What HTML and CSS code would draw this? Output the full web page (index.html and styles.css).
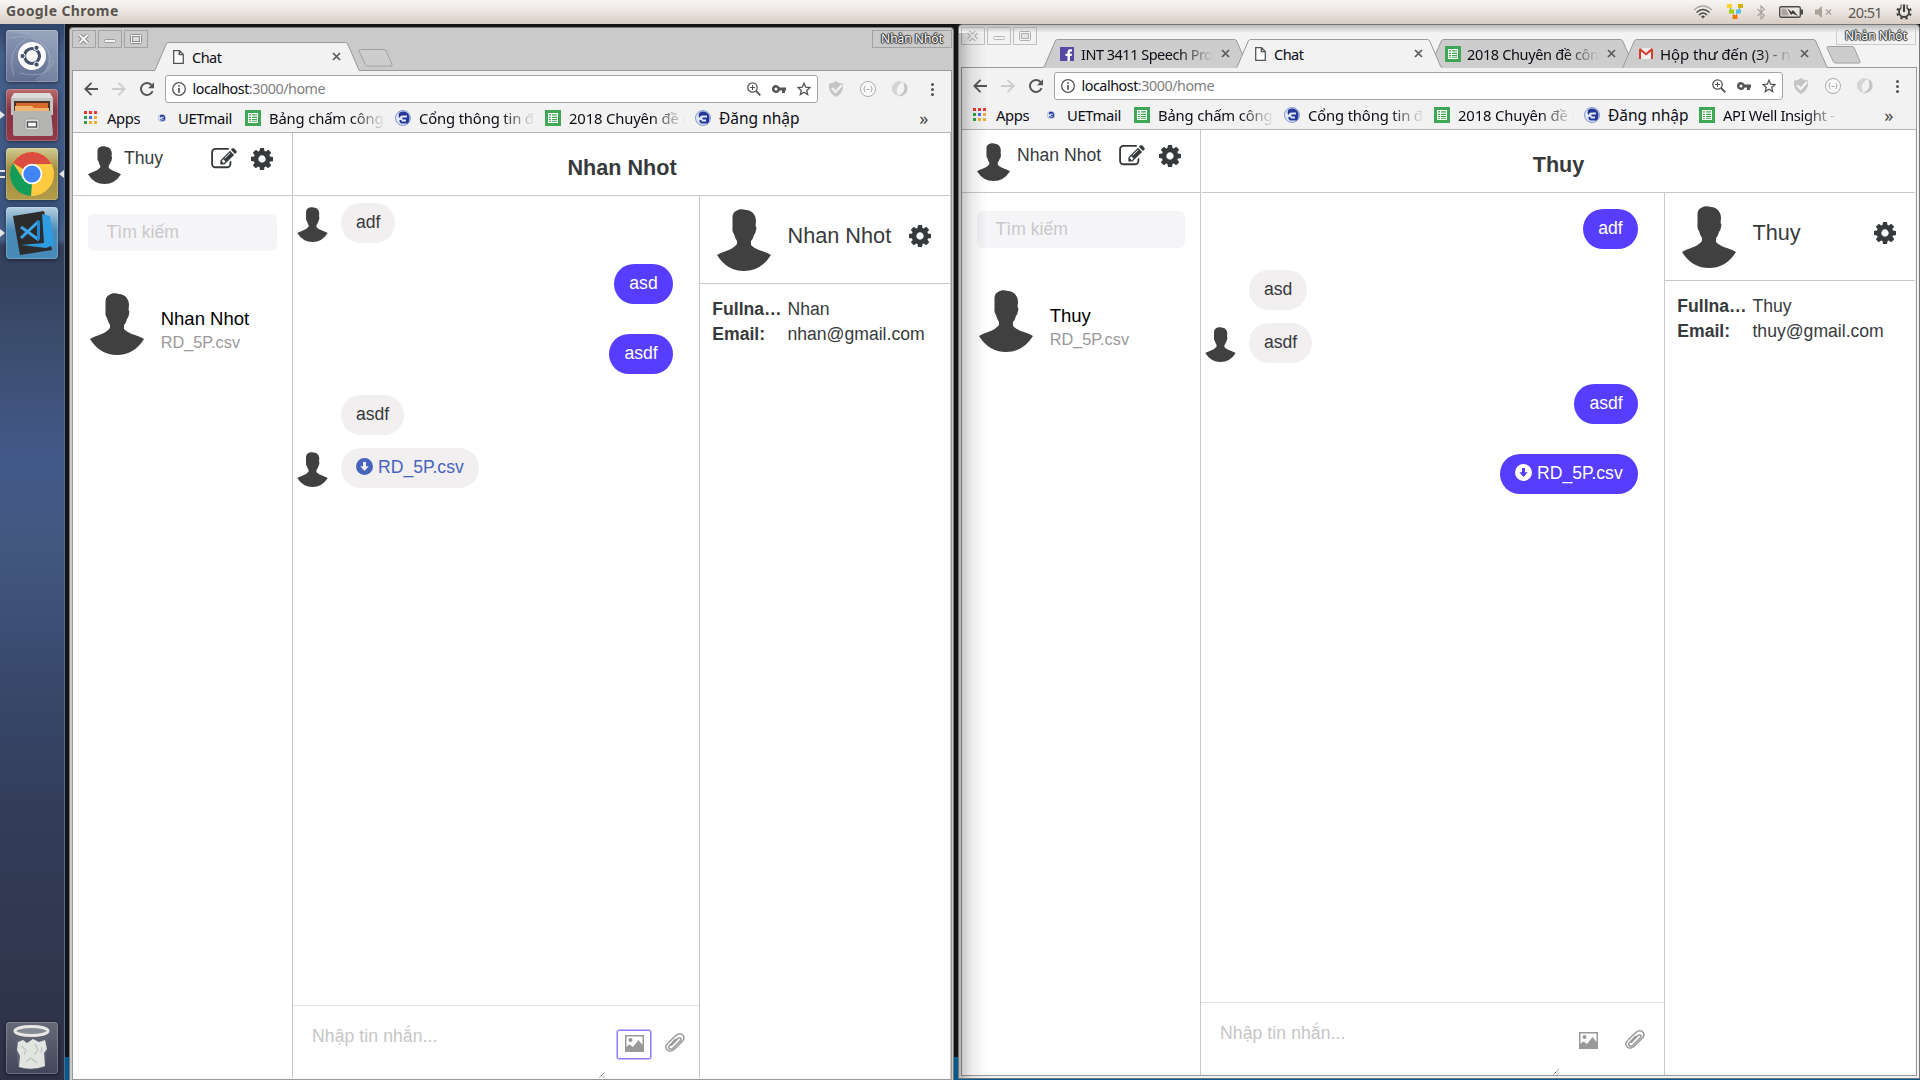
FILE: index.html
```html
<!DOCTYPE html>
<html lang="vi">
<head>
<meta charset="utf-8">
<title>Chat</title>
<link rel="stylesheet" href="styles.css">
</head>
<body>
<svg class="defs" aria-hidden="true">
  <symbol id="person" viewBox="0 0 54 62"><path d="M19 2C22 0 25 0 29 1C35 1 39 6 39 12L38.500 17Q40 18 39 21Q38.500 25 37 26Q36 30 34 32V36Q38 40 45 42Q51 44 54 46Q44 62 27 62Q10 62 0 46Q3 44 9 42Q16 40 20 35V32Q18 29 17 25Q15 23 15.500 18V10Q15 4 19 2Z" fill="#404040"/></symbol>
  <symbol id="cog" viewBox="128 128 1536 1536"><path d="M1152 896q0-106-75-181t-181-75-181 75-75 181 75 181 181 75 181-75 75-181zm512-109v222q0 12-8 23t-20 13l-185 28q-19 54-39 91 35 50 107 138 10 12 10 25t-9 23q-27 37-99 108t-94 71q-12 0-26-9l-138-108q-44 23-91 38-16 136-29 186-7 28-36 28h-222q-14 0-24.500-8.500t-11.500-21.500l-28-184q-49-16-90-37l-141 107q-10 9-25 9-14 0-25-11-126-114-165-168-7-10-7-23 0-12 8-23 15-21 51-66.500t54-70.500q-27-50-41-99l-183-27q-13-2-21-12.500t-8-23.500v-222q0-12 8-23t19-13l186-28q14-46 39-92-40-57-107-138-10-12-10-24 0-10 9-23 26-36 98.500-107.500t94.500-71.500q13 0 26 10l138 107q44-23 91-38 16-136 29-186 7-28 36-28h222q14 0 24.500 8.500t11.500 21.500l28 184q49 16 90 37l142-107q9-9 24-9 13 0 25 10 129 119 165 170 7 8 7 22 0 12-8 23-15 21-51 66.500t-54 70.500q26 50 41 98l183 28q13 2 21 12.500t8 23.500z" fill="#373a3c"/></symbol>
  <symbol id="edit" viewBox="0 128 1792 1536"><path d="M888 1184l116-116-152-152-116 116v56h96v96h56zm440-720q-16-16-33 1l-350 350q-17 17-1 33t33-1l350-350q17-17 1-33zm80 594v190q0 119-84.500 203.500t-203.500 84.500h-832q-119 0-203.500-84.500t-84.500-203.500v-832q0-119 84.500-203.500t203.500-84.500h832q63 0 117 25 15 7 18 23 3 17-9 29l-49 49q-14 14-32 8-23-6-45-6h-832q-66 0-113 47t-47 113v832q0 66 47 113t113 47h832q66 0 113-47t47-113v-126q0-13 9-22l64-64q15-15 35-7t20 29zm-96-738l288 288-672 672h-288v-288zm444 132l-92 92-288-288 92-92q28-28 68-28t68 28l152 152q28 28 28 68t-28 68z" fill="#373a3c"/></symbol>
  <symbol id="download" viewBox="0 0 17 17"><path fill-rule="evenodd" fill="currentColor" d="M8.500 0a8.500 8.500 0 1 1 0 17a8.500 8.500 0 1 1 0-17ZM7 4V8.200H4.300L8.500 13L12.700 8.200H10V4Z"/></symbol>
  <symbol id="image" viewBox="0 0 19 17"><path fill="#999" fill-rule="evenodd" d="M0 0H19V17H0ZM1.500 1.500V12L4 9.500L6 10.500L8 12L13.500 5L17.500 10V1.500ZM5.500 3a2 2 0 1 1 0 4a2 2 0 1 1 0-4Z"/></symbol>
  <symbol id="clip" viewBox="0 0 20 19"><path d="M3.500 9.500L10.500 2.800C13 .3 16.500.2 18 2.200C19.600 4.200 19 6.400 17.300 8.200L9.500 16C7.200 18.300 4 18.700 2.200 17C.5 15.300.6 12.700 2.500 10.700M6.500 12.300L13 5.600C14 4.600 15.300 4.700 15.800 5.500C16.300 6.300 16 7 15 8L7.800 15.300C6.600 16.400 5 16.500 4.200 15.600C3.400 14.700 3.600 13.600 4.700 12.400L10.500 6.300" fill="none" stroke="#999" stroke-width="1.500" stroke-linecap="round"/></symbol>
  <symbol id="grip" viewBox="0 0 6 6"><path d="M.5 5.500L5.500 .5M4 5.500L5.500 4" stroke="#555" stroke-dasharray="1.500 .6" fill="none"/></symbol>
  <symbol id="page" viewBox="0 0 11 14"><path d="M.7.700H6.500L10.300 4.500V13.300H.7ZM6.300.700V4.700H10.300" fill="#fff" stroke="#555" stroke-width="1.300"/></symbol>
  <symbol id="x" viewBox="0 0 9 9"><path d="M1 1L8 8M8 1L1 8" stroke="#5a5a5a" stroke-width="1.700"/></symbol>
  <symbol id="tabshape" viewBox="0 0 206 29"><path d="M0 28.500H.5Q1 28.500 1.500 27L12.300 2Q13 .5 14.500 .5H191.500Q193 .5 193.700 2L204.500 27Q205 28.500 206 28.500V29H0Z" fill="currentColor"/><path d="M0 28.500Q1 28.500 1.500 27L12.300 2Q13 .5 14.500 .5H191.500Q193 .5 193.700 2L204.500 27Q205 28.500 206 28.500" fill="none" stroke="#999"/></symbol>
  <symbol id="newtab" viewBox="0 0 35 18"><path d="M2.500.500H26Q27.500.500 28.200 2L34 15.500Q34.500 17 33 17H9.500Q8 17 7.300 15.500L1 2Q.5.500 2.500.500Z" fill="currentColor" stroke="#a0a0a0"/></symbol>
  <symbol id="back" viewBox="0 0 14 14"><path d="M14 7H1.500M7.500 .8L1.300 7L7.500 13.200" fill="none" stroke="currentColor" stroke-width="1.900"/></symbol>
  <symbol id="reload" viewBox="0 0 14 14"><path d="M12.600 9.200A6 6 0 1 1 11.500 3" fill="none" stroke="#555" stroke-width="1.900"/><path d="M14 .3V6.200H8Z" fill="#555"/></symbol>
  <symbol id="info" viewBox="0 0 14 14"><circle cx="7" cy="7" r="6.300" fill="none" stroke="#555" stroke-width="1.300"/><path d="M6.200 3.200H7.800V4.800H6.200ZM6.200 6H7.800V10.800H6.200Z" fill="#444"/></symbol>
  <symbol id="zoomin" viewBox="0 0 14 14"><circle cx="5.500" cy="5.500" r="4.700" fill="none" stroke="#555" stroke-width="1.300"/><path d="M9 9L13.300 13.300" stroke="#555" stroke-width="1.800"/><path d="M3 5.500H8M5.500 3V8" stroke="#555"/></symbol>
  <symbol id="key" viewBox="0 0 14 14"><path fill-rule="evenodd" fill="#555" d="M4 3A4 4 0 0 1 7.700 5.500H14V8.500H13V11H10V8.500H7.700A4 4 0 1 1 4 3ZM4 5.500A1.500 1.500 0 1 0 4 8.500A1.500 1.500 0 1 0 4 5.500Z"/></symbol>
  <symbol id="star" viewBox="0 0 14 14"><path d="M7 1.300L8.700 5.200L12.900 5.600L9.700 8.400L10.700 12.600L7 10.300L3.300 12.600L4.300 8.400L1.100 5.600L5.300 5.200Z" fill="none" stroke="#555" stroke-width="1.300"/></symbol>
  <symbol id="shield" viewBox="0 0 16 16"><path d="M1 2.500Q5 2.500 8 0Q11 2.500 15 2.500V7Q14 13 8 16Q2 13 1 7Z" fill="#c4c4c4"/><path d="M4 7L7.500 11L14 4" fill="none" stroke="#f2f2f2" stroke-width="2.300"/></symbol>
  <symbol id="json" viewBox="0 0 16 16"><circle cx="8" cy="8" r="7.500" fill="#fafafa" stroke="#aaa"/><path d="M5.500 5Q4.200 5 4.500 6.500Q4.700 8 3.500 8Q4.700 8 4.500 9.500Q4.200 11 5.500 11M10.500 5Q11.800 5 11.500 6.500Q11.300 8 12.500 8Q11.300 8 11.500 9.500Q11.800 11 10.500 11M6.500 8.500H9.500" fill="none" stroke="#aaa"/></symbol>
  <symbol id="swirl" viewBox="0 0 16 16"><path d="M10.500 1A7.300 7.300 0 0 0 1.500 12Q3 14.500 6.500 14.500Q1.500 7 10.500 1Z" fill="#d4d4d4"/><path d="M11 .8Q17.500 4 14.800 11Q11.500 16 5.500 15.200Q12 12.500 12.300 8Q12.500 4 11 .8Z" fill="#c4c4c4"/></symbol>
  <symbol id="apps" viewBox="0 0 13 13"><path d="M0 0h3v3H0zM5 0h3v3H5zM10 0h3v3h-3z" fill="#e33"/><path d="M0 5h3v3H0zM0 10h3v3H0z" fill="#2ba24c"/><path d="M5 5h3v3H5z" fill="#4a6cf0"/><path d="M10 5h3v3h-3zM5 10h3v3H5zM10 10h3v3h-3z" fill="#eeb035"/></symbol>
  <symbol id="sheet" viewBox="0 0 16 16"><path d="M0 0H16V16H0Z" fill="#3fa856"/><path d="M3 3H13V13H3Z" fill="#fff"/><path d="M4 4.200h2v1.400H4zM7 4.200h5v1.400H7zM4 6.700h2v1.200H4zM7 6.700h5v1.200H7zM4 9h2v1.200H4zM7 9h5v1.200H7zM4 11.200h2v.9H4zM7 11.200h5v.9H7z" fill="#3fa856"/></symbol>
  <symbol id="seal" viewBox="0 0 16 16"><circle cx="8" cy="8" r="7.500" fill="#dfe6f5" stroke="#8299cb"/><path d="M4 3Q9 0 13 3.500Q16 8 13 13.500H6Q4 12.500 4.500 10H6.500V11.500H11V9.500H7.500V7.500H12V5.500H7Q5 5.500 4.500 8Q3 5.500 4 3Z" fill="#25389a"/></symbol>
  <symbol id="fb" viewBox="0 0 14 14"><path d="M0 0H14V14H0Z" fill="#5848a5"/><path d="M7.500 14V9H5.500V6.800H7.500V5Q7.500 2.300 10.200 2.300H12V4.500H10.700Q9.900 4.500 9.900 5.300V6.800H12L11.700 9H9.900V14Z" fill="#fff"/></symbol>
  <symbol id="gmail" viewBox="0 0 14 11"><path d="M0 0H14V11H0Z" fill="#f0eeee"/><path d="M0 11V1Q1 0 2 .5L7 5L12 .5Q13 0 14 1V11H12V3.500L7 7.500L2 3.500V11Z" fill="#d93b30"/></symbol>
  <symbol id="wx" viewBox="0 0 24 18"><path d="M.5.500H23.500V17.500H.5Z" fill="none" stroke="#a2a2a2"/><path d="M7.500 5L15.500 13M15.500 5L7.500 13" stroke="#8c8c8c" stroke-width="4"/><path d="M7.500 5L15.500 13M15.500 5L7.500 13" stroke="#f4f4f4" stroke-width="2"/></symbol>
  <symbol id="wmin" viewBox="0 0 24 18"><path d="M.5.500H23.500V17.500H.5Z" fill="none" stroke="#a2a2a2"/><rect x="6.500" y="9.500" width="11" height="3" rx="1" fill="#f4f4f4" stroke="#9a9a9a"/></symbol>
  <symbol id="wmax" viewBox="0 0 24 18"><path d="M.5.500H23.500V17.500H.5Z" fill="none" stroke="#a2a2a2"/><rect x="6.500" y="4.500" width="11" height="9" rx="1" fill="#f4f4f4" stroke="#8c8c8c"/><rect x="8.500" y="6.500" width="7" height="5" fill="#ddd" stroke="#8c8c8c"/></symbol>
</svg>

<header class="panel">
  <span class="panel-title">Google Chrome</span>
  <div class="tray">
    <svg class="wifi" width="20" height="14" viewBox="0 0 20 14"><g fill="none" stroke-width="1.500"><path d="M1 5Q10-3 19 5" stroke="#aaa49d"/><path d="M3.500 7.500Q10 1.500 16.500 7.500M6 10Q10 6 14 10" stroke="#4c4a47"/></g><path d="M8 11.500Q10 9.500 12 11.500L10 13.500Z" fill="#4c4a47"/></svg>
    <svg class="net" width="16" height="16" viewBox="0 0 16 16"><path d="M3 3L5 8L8 13L11 8L13 3" stroke="#999" fill="none"/><path d="M0 0h5v4H0z" fill="#fcd32c"/><path d="M11 0h5v4h-5z" fill="#d8b000"/><path d="M2 5.500h5v4H2z" fill="#a5d400"/><path d="M9 5.500h5v4H9z" fill="#5bc0e8"/><path d="M5.500 11h5v4h-5z" fill="#f57900"/></svg>
    <svg class="bt" width="8" height="15" viewBox="0 0 8 15"><path d="M.5 4L7.300 10.500L4 14V1L7.300 4.300L.5 11" fill="none" stroke="#aaa49d" stroke-width="1.200"/></svg>
    <svg class="bat" width="24" height="12" viewBox="0 0 24 12"><rect x=".7" y=".7" width="20.600" height="10.600" rx="1.500" fill="none" stroke="#4c4a47" stroke-width="1.400"/><path d="M22 3.500h2v5h-2z" fill="#4c4a47"/><path d="M2.500 2.500H7L10 9.500H2.500Z" fill="#aaa49d"/><path d="M8 2L12.500 6L14 4L19 10L13.500 7.500L12 9Z" fill="#3b3936"/></svg>
    <svg class="mute" width="17" height="12" viewBox="0 0 17 12"><path d="M0 3.500H3L7 0V12L3 8.500H0Z" fill="#aaa49d"/><path d="M11 3.500L16 8.500M16 3.500L11 8.500" stroke="#aaa49d" stroke-width="1.500"/></svg>
    <span class="clock">20:51</span>
    <svg class="power" width="16" height="16" viewBox="0 0 16 16"><circle cx="8" cy="8" r="5" fill="none" stroke="#3f3d3a" stroke-width="1.800"/><circle cx="8" cy="8" r="6.700" fill="none" stroke="#3f3d3a" stroke-width="2.200" stroke-dasharray="2.200 3.060" stroke-dashoffset="-1.500"/><path d="M5.500 0H10.500V7H5.500Z" fill="#e5dfd9"/><path d="M8 .5V8" stroke="#3f3d3a" stroke-width="2"/></svg>
  </div>
</header>

<nav class="launcher">
  <div class="tile tile-dash"><svg viewBox="0 0 52 52"><g fill="none" stroke="#aab7cf" opacity=".55"><path d="M3 8Q28 2 42 20Q50 36 30 50"/><path d="M8 46Q0 20 20 9M48 30Q42 50 14 43"/></g><path d="M0 2Q35 4 42 24Q44 40 30 52H52V0H0Z" fill="#fff" opacity=".12"/><circle cx="26" cy="26" r="14" fill="#fff"/><circle cx="26" cy="26" r="7.500" fill="none" stroke="#44516f" stroke-width="3.200"/><g fill="#44516f" stroke="#fff"><circle cx="16.500" cy="26" r="2.600"/><circle cx="30.500" cy="17.800" r="2.600"/><circle cx="30.500" cy="34.500" r="2.600"/></g></svg></div>
  <div class="tile tile-files"><svg viewBox="0 0 52 52"><path d="M8 4H44L47 9V26H5V9Z" fill="#dcdcda"/><path d="M5 9H47V26H5Z" fill="#c4c4c2"/><path d="M8 12H44V24H8Z" fill="#4b332b"/><path d="M10 14H42V24H10Z" fill="#d96a2c"/><path d="M9 17H26L28 19H43V25H9Z" fill="#f2b673"/><path d="M7 22H45L47 45Q47 47 45 47H9Q7 47 7 45Z" fill="#b4b4b2"/><rect x="19" y="30" width="14" height="11" rx="2" fill="#d9d9d7" stroke="#a0a09e"/><rect x="21.500" y="33" width="9" height="5" fill="#fff" stroke="#444" stroke-width="1.300"/></svg></div>
  <div class="tile tile-chrome"><svg viewBox="0 0 52 52"><circle cx="26" cy="26" r="22" fill="#fdca40"/><path d="M26 26L6.900 15A22 22 0 0 1 45.500 16H26Z" fill="#dc4c40"/><path d="M6.900 15L17.300 31L26 36L25 48A22 22 0 0 1 6.900 15Z" fill="#149c58"/><circle cx="26" cy="26" r="10.300" fill="#fff"/><circle cx="26" cy="26" r="8.600" fill="#4285f4"/></svg></div>
  <div class="tile tile-code"><svg viewBox="0 0 52 52"><path d="M7 9L38 4L46 43L14 48Z" fill="#2c2c2c"/><path d="M36 7L44 9L48 38L40 41L15 38L38 36Z" fill="#2f9be0"/><path d="M15 31L33 14M15 20L33 33" stroke="#3aa5ea" stroke-width="3"/><path d="M31 13L34 14V32L31 34Z" fill="#1f86d0"/></svg></div>
  <div class="tile tile-trash"><svg viewBox="0 0 52 52"><path d="M9 10H42L39 45Q26 50 12 45Z" fill="#5d6372"/><path d="M12 20L17 18L21 21L27 17L33 20L39 18L41 27L38 31L39 44Q26 49 13 45L14 34L11 28Z" fill="#e2e4e1"/><path d="M15 24L20 28L18 33M29 22L32 28L28 33M36 25L35 31M20 40L25 36L31 41" stroke="#bfc2c0" stroke-width="1.200" fill="none"/><ellipse cx="25.500" cy="9" rx="16.500" ry="4.500" fill="#858b92" stroke="#e8e9e4" stroke-width="3"/></svg></div>
  <i class="pip pip-files"></i><i class="pip pip-chrome"></i><i class="pip pip-active"></i><i class="pip pip-code"></i>
</nav>

<section class="window window-left">
  <div class="titlebar">
    <div class="controls"><svg><use href="#wx"/></svg><svg><use href="#wmin"/></svg><svg><use href="#wmax"/></svg></div>
    <div class="tabs">
      <div class="tab active"><svg class="shape"><use href="#tabshape"/></svg><svg class="fav fav-page"><use href="#page"/></svg><span class="label">Chat</span><svg class="close"><use href="#x"/></svg></div>
      <svg class="newtab"><use href="#newtab"/></svg>
    </div>
    <div class="profile">Nhàn Nhót</div>
  </div>
  <div class="frame">
    <div class="toolbar">
      <svg class="nav-icon"><use href="#back"/></svg><svg class="nav-icon forward"><use href="#back"/></svg><svg class="nav-icon"><use href="#reload"/></svg>
      <div class="omnibox"><svg><use href="#info"/></svg><span class="url"><b>localhost</b>:3000/home</span><svg><use href="#zoomin"/></svg><svg><use href="#key"/></svg><svg><use href="#star"/></svg></div>
      <div class="extensions"><svg><use href="#shield"/></svg><svg><use href="#json"/></svg><svg><use href="#swirl"/></svg><i class="kebab"></i></div>
    </div>
    <div class="bookmarks">
      <div class="bm bm-apps"><svg class="apps"><use href="#apps"/></svg><span>Apps</span></div>
      <div class="bm bm-uet"><svg class="dot"><use href="#seal"/></svg><span>UETmail</span></div>
      <div class="bm vi"><svg><use href="#sheet"/></svg><span class="cut">Bảng chấm công</span></div>
      <div class="bm vi"><svg><use href="#seal"/></svg><span class="cut">Cổng thông tin đ</span></div>
      <div class="bm vi"><svg><use href="#sheet"/></svg><span class="cut">2018 Chuyên đề c</span></div>
      <div class="bm bm-login"><svg><use href="#seal"/></svg><span>Đăng nhập</span></div>
      <div class="more">»</div>
    </div>
    <main class="app">
      <aside class="sidebar">
        <div class="me"><svg class="av-me"><use href="#person"/></svg><span>Thuy</span><svg class="edit"><use href="#edit"/></svg><svg class="cog"><use href="#cog"/></svg></div>
        <div class="search">Tìm kiếm</div>
        <div class="contact"><svg class="av"><use href="#person"/></svg><div><p class="name">Nhan Nhot</p><p class="last">RD_5P.csv</p></div></div>
      </aside>
      <div class="main">
        <h1>Nhan Nhot</h1>
        <div class="columns">
          <div class="chat">
            <div class="messages">
              <div class="msg in first"><svg><use href="#person"/></svg><p>adf</p></div>
              <div class="msg out"><p>asd</p></div>
              <div class="msg out again"><p>asdf</p></div>
              <div class="msg in"><p>asdf</p></div>
              <div class="msg in follow"><svg><use href="#person"/></svg><p class="file"><svg><use href="#download"/></svg> RD_5P.csv</p></div>
            </div>
            <div class="composer"><div class="textarea">Nhập tin nhắn...<svg><use href="#grip"/></svg></div><div class="pick focused"><svg><use href="#image"/></svg></div><svg class="clip"><use href="#clip"/></svg></div>
          </div>
          <div class="info">
            <div class="who"><svg class="av"><use href="#person"/></svg><span>Nhan Nhot</span><svg class="cog"><use href="#cog"/></svg></div>
            <dl><dt>Fullna…</dt><dd>Nhan</dd><dt>Email:</dt><dd>nhan@gmail.com</dd></dl>
          </div>
        </div>
      </div>
    </main>
  </div>
</section>

<section class="window window-right">
  <div class="titlebar">
    <div class="controls"><svg><use href="#wx"/></svg><svg><use href="#wmin"/></svg><svg><use href="#wmax"/></svg></div>
    <div class="tabs">
      <div class="tab"><svg class="shape"><use href="#tabshape"/></svg><svg class="fav fav-fb"><use href="#fb"/></svg><span class="label cut">INT 3411 Speech Pro</span><svg class="close"><use href="#x"/></svg></div>
      <div class="tab active"><svg class="shape"><use href="#tabshape"/></svg><svg class="fav fav-page"><use href="#page"/></svg><span class="label">Chat</span><svg class="close"><use href="#x"/></svg></div>
      <div class="tab"><svg class="shape"><use href="#tabshape"/></svg><svg class="fav fav-sheet"><use href="#sheet"/></svg><span class="label cut vi">2018 Chuyên đề công</span><svg class="close"><use href="#x"/></svg></div>
      <div class="tab"><svg class="shape"><use href="#tabshape"/></svg><svg class="fav fav-gm"><use href="#gmail"/></svg><span class="label cut vi wide">Hộp thư đến (3) - nh</span><svg class="close"><use href="#x"/></svg></div>
      <svg class="newtab"><use href="#newtab"/></svg>
    </div>
    <div class="profile">Nhàn Nhót</div>
  </div>
  <div class="frame">
    <div class="toolbar">
      <svg class="nav-icon"><use href="#back"/></svg><svg class="nav-icon forward"><use href="#back"/></svg><svg class="nav-icon"><use href="#reload"/></svg>
      <div class="omnibox"><svg><use href="#info"/></svg><span class="url"><b>localhost</b>:3000/home</span><svg><use href="#zoomin"/></svg><svg><use href="#key"/></svg><svg><use href="#star"/></svg></div>
      <div class="extensions"><svg><use href="#shield"/></svg><svg><use href="#json"/></svg><svg><use href="#swirl"/></svg><i class="kebab"></i></div>
    </div>
    <div class="bookmarks">
      <div class="bm bm-apps"><svg class="apps"><use href="#apps"/></svg><span>Apps</span></div>
      <div class="bm bm-uet"><svg class="dot"><use href="#seal"/></svg><span>UETmail</span></div>
      <div class="bm vi"><svg><use href="#sheet"/></svg><span class="cut">Bảng chấm công</span></div>
      <div class="bm vi"><svg><use href="#seal"/></svg><span class="cut">Cổng thông tin đ</span></div>
      <div class="bm vi"><svg><use href="#sheet"/></svg><span class="cut">2018 Chuyên đề c</span></div>
      <div class="bm bm-login"><svg><use href="#seal"/></svg><span>Đăng nhập</span></div>
      <div class="bm"><svg><use href="#sheet"/></svg><span class="cut">API Well Insight - D</span></div>
      <div class="more">»</div>
    </div>
    <main class="app">
      <aside class="sidebar">
        <div class="me"><svg class="av-me"><use href="#person"/></svg><span>Nhan Nhot</span><svg class="edit"><use href="#edit"/></svg><svg class="cog"><use href="#cog"/></svg></div>
        <div class="search">Tìm kiếm</div>
        <div class="contact"><svg class="av"><use href="#person"/></svg><div><p class="name">Thuy</p><p class="last">RD_5P.csv</p></div></div>
      </aside>
      <div class="main">
        <h1>Thuy</h1>
        <div class="columns">
          <div class="chat">
            <div class="messages">
              <div class="msg out first"><p>adf</p></div>
              <div class="msg in"><p>asd</p></div>
              <div class="msg in follow"><svg><use href="#person"/></svg><p>asdf</p></div>
              <div class="msg out"><p>asdf</p></div>
              <div class="msg out again"><p class="file"><svg><use href="#download"/></svg> RD_5P.csv</p></div>
            </div>
            <div class="composer"><div class="textarea">Nhập tin nhắn...<svg><use href="#grip"/></svg></div><div class="pick"><svg><use href="#image"/></svg></div><svg class="clip"><use href="#clip"/></svg></div>
          </div>
          <div class="info">
            <div class="who"><svg class="av"><use href="#person"/></svg><span>Thuy</span><svg class="cog"><use href="#cog"/></svg></div>
            <dl><dt>Fullna…</dt><dd>Thuy</dd><dt>Email:</dt><dd>thuy@gmail.com</dd></dl>
          </div>
        </div>
      </div>
    </main>
  </div>
</section>
</body>
</html>
```
FILE: styles.css
```css
* { box-sizing: border-box; margin: 0; padding: 0; }
body { width: 1920px; height: 1080px; overflow: hidden; position: relative; background: linear-gradient(#141414 0 1057px, #045a8c 1057px); font-family: "Noto Sans", "Open Sans", sans-serif; color: #1a1a1a; }
svg { display: block; flex: none; }
.defs { position: absolute; width: 0; height: 0; }

/* top panel */
.panel { height: 24px; display: flex; align-items: center; justify-content: space-between; padding: 0 8px 0 6px; background: linear-gradient(#f7f5f3, #e9e4df 50%, #d7cdc4); color: #5a544e; }
.panel-title { font-weight: 700; font-size: 14px; line-height: 20px; letter-spacing: .4px; margin-top: -2px; }
.tray { display: flex; align-items: center; }
.net { margin-left: 14px; }
.bt { margin-left: 14px; }
.bat { margin-left: 14px; }
.mute { margin-left: 12px; }
.clock { margin-left: 16px; width: 34px; font-size: 14.500px; line-height: 20px; letter-spacing: -.6px; white-space: nowrap; }
.power { margin-left: 14px; }

/* launcher */
.launcher { position: relative; width: 65px; height: 1056px; padding: 6px 0 6px 6px; display: flex; flex-direction: column; gap: 7px; background: linear-gradient(#2f456b, #46608c 30px, #3d5580 190px, #4a628c 215px, #32405c 222px, #35435f 260px, #3b4d6e 320px, #43598a 440px, #43587f 520px, #38496d 650px, #333c58 800px, #2d3246 100%); border-right: 1px solid #4f6c98; }
.tile { width: 52px; height: 52px; flex: none; border-radius: 4px; box-shadow: inset 0 0 0 1px rgba(255,255,255,.2), 0 1px 4px rgba(0,0,0,.5); }
.tile svg { width: 52px; height: 52px; }
.tile-dash { background: linear-gradient(#8c9ab5, #626f93); }
.tile-files { background: linear-gradient(#bd6b6d, #833542 40%, #943849); }
.tile-chrome { background: linear-gradient(#d5cb91, #a18d40 40%, #b29c49); }
.tile-code { background: linear-gradient(#b5cfe0, #4a8bb8 45%, #468ab8); }
.tile-trash { margin-top: auto; background: linear-gradient(#666a78, #41465a); }
.pip { position: absolute; border: solid transparent; border-width: 4px 0 4px 5px; border-left-color: #e4e4e4; left: 0; }
.pip-files { top: 87px; }
.pip-code { top: 205px; }
.pip-chrome { top: 146px; width: 5px; height: 8px; border: solid #e4e4e4; border-width: 2px 0; }
.pip-active { top: 146px; left: 59px; border-width: 4px 5px 4px 0; border-color: transparent #e4e4e4; }

/* browser windows */
.window { position: absolute; padding: 0 3px 0 2px; display: flex; flex-direction: column; border: 1px solid #777; border-bottom: 0; border-radius: 4px 4px 0 0; }
.window-left { left: 69px; top: 27px; width: 885px; height: 1053px; background: #cacaca; padding-right: 1px; }
.window-right { left: 958px; top: 24px; width: 962px; height: 1055px; background: linear-gradient(#bbb, #f3f3f3 8px); border-bottom: 1px solid #777; padding-bottom: 2px; }
.window-right::after { content: ""; position: absolute; left: 0; top: 8px; bottom: 0; width: 28px; background: linear-gradient(90deg, rgba(0,0,0,.26), rgba(0,0,0,.08) 45%, transparent); }
.titlebar { height: 42px; flex: none; display: flex; align-items: flex-start; position: relative; }
.controls { display: flex; gap: 2px; margin-top: 2px; width: 82px; }
.controls svg { width: 24px; height: 18px; }
.window-right .controls { opacity: .65; }
.tabs { display: flex; margin-top: 14px; height: 29px; }
.tab { position: relative; width: 206px; height: 29px; margin-right: -13px; display: flex; align-items: center; color: #cdcdcd; padding: 0 19px 0 17px; }
.tab.active { color: #f2f2f2; z-index: 2; padding-left: 19px; }
.tab .shape { position: absolute; left: 0; top: 0; width: 206px; height: 29px; }
.fav { position: relative; width: 16px; height: 16px; }
.fav-page { width: 11px; height: 14px; margin-right: 2px; }
.fav-fb { width: 14px; height: 14px; margin-right: 1px; }
.fav-gm { width: 14px; height: 11px; margin-right: 1px; }
.fav-sheet { margin-left: -1px; }
.label { position: relative; flex: 1; margin: 0 8px 0 6px; min-width: 0; white-space: nowrap; overflow: hidden; font-size: 14.500px; line-height: 22px; letter-spacing: -.5px; color: #0c0c14; }
.label.vi { letter-spacing: -.35px; }
.label.wide { font-size: 15px; letter-spacing: -.1px; }
.cut { -webkit-mask-image: linear-gradient(90deg, #000 calc(100% - 34px), transparent); mask-image: linear-gradient(90deg, #000 calc(100% - 34px), transparent); }
.close { position: relative; width: 9px; height: 9px; }
.newtab { width: 35px; height: 18px; margin: 7px 0 0 11px; color: #cdcdcd; }
.profile { position: absolute; right: 0; top: 2px; width: 80px; height: 18px; border: 1px solid #a2a2a2; text-align: center; font-size: 12px; line-height: 15px; color: #fff; text-shadow: 0 0 1px #333, 1px 0 1px #333, -1px 0 1px #333, 0 1px 1px #333, 0 -1px 1px #333; white-space: nowrap; }
.window-right .profile { border-color: #ccc; }
.frame { flex: 1; min-height: 0; display: flex; flex-direction: column; border: 1px solid #999; }
.window-right .frame { margin-right: -1px; }
.toolbar { height: 36px; flex: none; background: #f2f2f2; display: flex; align-items: center; padding-left: 11px; }
.nav-icon { width: 14px; height: 14px; margin-right: 14px; color: #555; }
.nav-icon + .nav-icon + .nav-icon { margin-right: 11px; }
.forward { transform: scaleX(-1); color: #ccc; }
.omnibox { flex: 1; height: 28px; border: 1px solid #a5a5a5; border-radius: 3px; background: #fff; display: flex; align-items: center; padding: 0 6px; gap: 11px; }
.omnibox svg { width: 14px; height: 14px; }
.url { flex: 1; margin-left: -4.500px; font-size: 14.300px; line-height: 20px; letter-spacing: -.45px; color: #808080; }
.url b { font-weight: 400; color: #0c0c14; }
.extensions { width: 133px; padding-left: 10px; display: flex; gap: 16px; align-items: center; }
.extensions svg { width: 16px; height: 16px; }
.kebab { width: 3px; height: 3px; margin-left: 7px; border-radius: 50%; background: #555; box-shadow: 0 -5px #555, 0 5px #555; }
.bookmarks { height: 26px; flex: none; background: #f2f2f2; border-bottom: 1px solid #b5b5b5; display: flex; align-items: center; padding: 0 23px 4px 11px; font-size: 14.800px; letter-spacing: -.35px; color: #0c0c14; }
.bm { width: 150px; flex: none; display: flex; gap: 8px; align-items: center; white-space: nowrap; line-height: 22px; }
.bm svg { width: 16px; height: 16px; }
.bm .apps { width: 13px; height: 13px; }
.bm span { overflow: hidden; }
.bm .cut { width: 116px; }
.vi { letter-spacing: -.15px; }
.bm-apps { width: 74px; gap: 10px; }
.bm-uet { width: 87px; gap: 12px; }
.bm .dot { width: 8px; height: 8px; }
.bm-login { width: 115px; font-size: 15.500px; letter-spacing: 0; }
.more { margin-left: auto; font-size: 18px; line-height: 20px; color: #444; }

/* chat application */
.app { flex: 1; min-height: 0; display: flex; background: #fff; font-family: "Liberation Sans", Arial, sans-serif; font-size: 17.600px; color: #373a3c; margin-right: 1px; }
.window-left .app { border-bottom: 1px solid #fff; }
.sidebar { width: 220px; flex: none; border-right: 1px solid #c8c8c8; }
.window-right .sidebar { width: 239px; }
.me { height: 63px; border-bottom: 1px solid #c8c8c8; display: flex; align-items: flex-start; padding: 13px 19.500px 0 15px; }
.me span { flex: 1; margin-left: 3px; line-height: 24px; white-space: nowrap; }
.window-right .me span { margin-left: 7px; }
.av-me { width: 33px; height: 38px; }
.edit { width: 26px; height: 22px; margin: 2px 14px 0 0; }
.cog { width: 22px; height: 22px; margin-top: 2px; }
.search { margin: 18px 15px 0; height: 37px; border-radius: 6px; background: #f5f5f8; color: #c9c9c9; padding-left: 18.500px; line-height: 36px; }
.contact { margin-top: 42px; padding-left: 17px; display: flex; gap: 16.700px; }
.av { width: 54px; height: 62px; }
.name { margin-top: 14px; font-size: 18.500px; line-height: 24px; color: #000; }
.last { font-size: 16.300px; line-height: 23px; color: #999; }
.main { flex: 1; min-width: 0; display: flex; flex-direction: column; }
h1 { height: 63px; flex: none; border-bottom: 1px solid #c8c8c8; text-align: center; font-size: 21.600px; line-height: 70px; margin-left: 1px; }
.columns { flex: 1; min-height: 0; display: flex; }
.chat { flex: 1; display: flex; flex-direction: column; border-right: 1px solid #c8c8c8; }
.messages { flex: 1; padding: 7px 26px 0 4px; }
.window-right .messages { padding-top: 16px; }
.msg { display: flex; margin-top: 21.200px; padding-left: 44px; position: relative; }
.msg.first { margin-top: 0; }
.msg.follow { margin-top: 12.500px; }
.msg.again { margin-top: 30px; }
.msg.out { justify-content: flex-end; }
.msg.in > svg { width: 31px; height: 35px; margin: 4px 13px 0 -44px; }
.msg p { height: 40px; border-radius: 20px; padding: 0 15px; line-height: 39px; background: #f1eff0; white-space: nowrap; }
.msg.out p { background: #563dff; color: #fff; padding: 0 15.300px; }
.msg .file { display: flex; gap: 5px; color: #4764bd; }
.file svg { width: 17px; height: 17px; margin-top: 10px; }
.composer { height: 73px; flex: none; border-top: 1px solid #e2e2e2; display: flex; align-items: flex-start; padding-right: 14px; }
.textarea { flex: 1; align-self: stretch; position: relative; padding-left: 19px; line-height: 60px; letter-spacing: .08px; color: #c6c6c6; }
.textarea svg { position: absolute; right: 0; bottom: 0; width: 6px; height: 6px; }
.pick { width: 34px; height: 29px; margin: 24px 14px 0 12px; padding: 4px 6.500px; border: 1px solid transparent; border-radius: 2px; }
.window-right .pick { margin-right: 20px; }
.window-right .composer { padding-right: 19px; }
.pick.focused { border-color: #8c7bff; box-shadow: 0 0 0 .5px #8c7bff; }
.pick svg { width: 19px; height: 17px; }
.clip { width: 20px; height: 19px; margin-top: 26.500px; }
.info { width: 250px; flex: none; }
.who { height: 88px; border-bottom: 1px solid #c8c8c8; display: flex; align-items: flex-start; padding: 13px 19.500px 0 17px; }
.who span { flex: 1; margin-left: 16.500px; font-size: 21.700px; line-height: 54px; white-space: nowrap; }
.who .cog { margin-top: 16px; }
dl { display: grid; grid-template-columns: 72px 1fr; column-gap: 3.200px; padding: 13px 0 0 12.300px; line-height: 25px; }
dt { font-weight: 700; white-space: nowrap; }
```
